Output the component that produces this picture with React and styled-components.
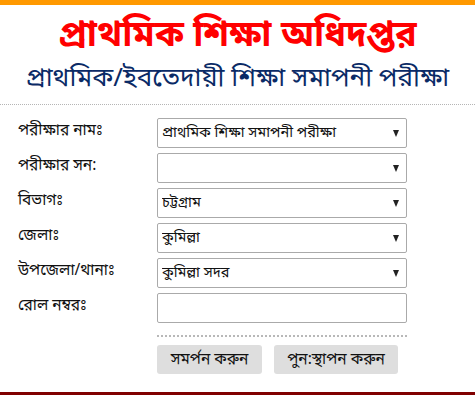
import React from 'react';
import styled, { createGlobalStyle } from 'styled-components';

const GlobalStyle = createGlobalStyle`
  html, body {
    margin: 0;
    padding: 0;
    background: #fff;
  }
  body {
    font-family: "Noto Sans Bengali", "Vrinda", "Noto Sans", "Liberation Sans", sans-serif;
  }
`;

const Page = styled.div`
  width: 475px;
  height: 395px;
  display: flex;
  flex-direction: column;
  border-top: 5px solid #ff9900;
  border-bottom: 3px solid #800000;
  box-sizing: border-box;
`;

const Header = styled.div`
  display: flex;
  flex-direction: column;
  align-items: center;
  padding-top: 10px;
  height: 100px;
  box-sizing: border-box;
  border-bottom: 1px dotted #b5b5b5;
`;

const Title = styled.h1`
  margin: 0;
  font-size: 36px;
  line-height: 44px;
  font-weight: 700;
  color: #ff0000;
`;

const Subtitle = styled.h2`
  margin: 0;
  margin-top: 4px;
  font-size: 26px;
  line-height: 34px;
  font-weight: 400;
  color: #0a2a66;
`;

const Form = styled.form`
  display: flex;
  flex-direction: column;
  gap: 5px;
  padding: 13px 0 0 18px;
`;

const Row = styled.div`
  display: grid;
  grid-template-columns: 139px 250px;
  align-items: start;
`;

const Label = styled.label`
  font-size: 15.5px;
  line-height: 27px;
  color: #111;
`;

const SelectWrap = styled.div`
  position: relative;
  height: 30px;
`;

const Select = styled.select`
  appearance: none;
  width: 100%;
  height: 30px;
  margin: 0;
  padding: 0 20px 0 4px;
  border: 1px solid #aaa;
  border-radius: 2px;
  background: #fff;
  font-family: inherit;
  font-size: 14.5px;
  color: #111;
`;

const Arrow = styled.span`
  position: absolute;
  right: 8px;
  top: 12px;
  width: 0;
  height: 0;
  border-left: 3px solid transparent;
  border-right: 3px solid transparent;
  border-top: 7px solid #222;
  pointer-events: none;
`;

const Input = styled.input`
  width: 100%;
  height: 30px;
  margin: 0;
  box-sizing: border-box;
  border: 1px solid #aaa;
  border-radius: 2px;
`;

const Actions = styled.div`
  display: flex;
  flex-direction: column;
  gap: 8px;
  margin: 12px 0 0 157px;
  width: 250px;
`;

const Divider = styled.div`
  border-top: 2px dotted #b8b8b8;
`;

const Buttons = styled.div`
  display: flex;
  gap: 12px;
`;

const Button = styled.button`
  height: 29px;
  width: ${({ w }) => w}px;
  padding: 0;
  border: none;
  border-radius: 3px;
  background: #dedede;
  font-family: inherit;
  font-size: 15.5px;
  color: #111;
`;

const fields = [
  { label: 'পরীক্ষার নামঃ', value: 'প্রাথমিক শিক্ষা সমাপনী পরীক্ষা' },
  { label: 'পরীক্ষার সন:', value: '' },
  { label: 'বিভাগঃ', value: 'চট্টগ্রাম' },
  { label: 'জেলাঃ', value: 'কুমিল্লা' },
  { label: 'উপজেলা/থানাঃ', value: 'কুমিল্লা সদর' },
];

const App = () => (
  <>
    <GlobalStyle />
    <Page>
      <Header>
        <Title>প্রাথমিক শিক্ষা অধিদপ্তর</Title>
        <Subtitle>প্রাথমিক/ইবতেদায়ী শিক্ষা সমাপনী পরীক্ষা</Subtitle>
      </Header>
      <Form onSubmit={(e) => e.preventDefault()}>
        {fields.map((f) => (
          <Row key={f.label}>
            <Label>{f.label}</Label>
            <SelectWrap>
              <Select defaultValue={f.value}>
                <option value={f.value}>{f.value}</option>
              </Select>
              <Arrow />
            </SelectWrap>
          </Row>
        ))}
        <Row>
          <Label>রোল নম্বরঃ</Label>
          <Input type="text" />
        </Row>
      </Form>
      <Actions>
        <Divider />
        <Buttons>
          <Button type="submit" w={105}>সমর্পন করুন</Button>
          <Button type="reset" w={124}>পুন:স্থাপন করুন</Button>
        </Buttons>
      </Actions>
    </Page>
  </>
);

export default App;
